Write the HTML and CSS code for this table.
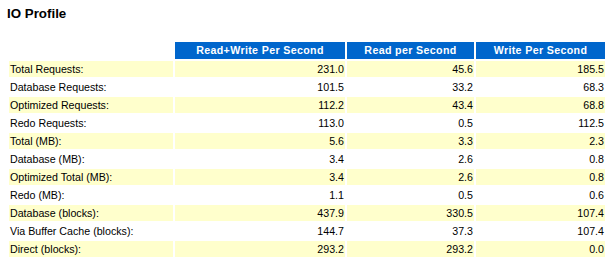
FILE: index.html
```html
<!DOCTYPE html>
<html>
<head>
<meta charset="utf-8">
<link rel="stylesheet" href="styles.css">
</head>
<body>
<div class="title">IO Profile</div>
<table class="profile">
<colgroup>
<col class="c-label"><col class="c-rw"><col class="c-r"><col class="c-w">
</colgroup>
<tr><td class="blank"></td><th>Read+Write Per Second</th><th>Read per Second</th><th>Write Per Second</th></tr>
<tr class="odd"><td>Total Requests:</td><td class="n">231.0</td><td class="n">45.6</td><td class="n">185.5</td></tr>
<tr><td>Database Requests:</td><td class="n">101.5</td><td class="n">33.2</td><td class="n">68.3</td></tr>
<tr class="odd"><td>Optimized Requests:</td><td class="n">112.2</td><td class="n">43.4</td><td class="n">68.8</td></tr>
<tr><td>Redo Requests:</td><td class="n">113.0</td><td class="n">0.5</td><td class="n">112.5</td></tr>
<tr class="odd"><td>Total (MB):</td><td class="n">5.6</td><td class="n">3.3</td><td class="n">2.3</td></tr>
<tr><td>Database (MB):</td><td class="n">3.4</td><td class="n">2.6</td><td class="n">0.8</td></tr>
<tr class="odd"><td>Optimized Total (MB):</td><td class="n">3.4</td><td class="n">2.6</td><td class="n">0.8</td></tr>
<tr><td>Redo (MB):</td><td class="n">1.1</td><td class="n">0.5</td><td class="n">0.6</td></tr>
<tr class="odd"><td>Database (blocks):</td><td class="n">437.9</td><td class="n">330.5</td><td class="n">107.4</td></tr>
<tr><td>Via Buffer Cache (blocks):</td><td class="n">144.7</td><td class="n">37.3</td><td class="n">107.4</td></tr>
<tr class="odd"><td>Direct (blocks):</td><td class="n">293.2</td><td class="n">293.2</td><td class="n">0.0</td></tr>
</table>
</body>
</html>
```
FILE: styles.css
```css
body {
  margin: 0;
  padding: 6px 0 0 7px;
  background: #ffffff;
  font-family: "Liberation Sans", Arial, sans-serif;
  color: #000000;
}
.title {
  font-weight: bold;
  font-size: 13.33px;
  line-height: 16px;
  height: 16px;
  margin-bottom: 18px;
}
.profile {
  width: 600px;
  border-collapse: separate;
  border-spacing: 2px;
  table-layout: fixed;
  margin: 0;
}
.c-label { width: 164px; }
.c-rw { width: 170px; }
.c-r { width: 127px; }
.c-w { width: 129px; }
.profile th {
  background: #0066cc;
  color: #ffffff;
  font-weight: bold;
  font-size: 10.67px;
  letter-spacing: 0.35px;
  line-height: 14px;
  padding: 1px 4px 2px 4px;
  text-align: center;
  white-space: nowrap;
}
.profile td {
  font-size: 10.67px;
  line-height: 14px;
  padding: 1px;
  white-space: nowrap;
  background: #ffffff;
}
.profile td.blank { background: transparent; }
.profile tr.odd td { background: #ffffcc; }
.profile td.n { text-align: right; }
```
